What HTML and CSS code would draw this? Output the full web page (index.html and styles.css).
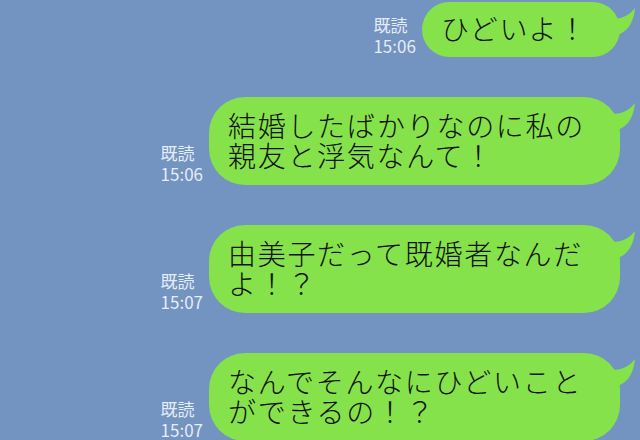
FILE: index.html
```html
<!DOCTYPE html>
<html lang="ja">
<head>
<meta charset="utf-8">
<link rel="stylesheet" href="styles.css">
</head>
<body>
<div class="chat">
  <div class="row">
    <div class="meta"><span>既読</span><span>15:06</span></div>
    <div class="bubble single">ひどいよ！<svg class="tail" width="26" height="34" viewBox="0 0 26 34"><path d="M0,13 Q15,14 24,2 Q22,22 9,28 L0,30 Z"/></svg></div>
  </div>
  <div class="row">
    <div class="meta"><span>既読</span><span>15:06</span></div>
    <div class="bubble wide">結婚したばかりなのに私の<br>親友と浮気なんて！<svg class="tail" width="26" height="34" viewBox="0 0 26 34"><path d="M0,13 Q15,14 24,2 Q22,22 9,28 L0,30 Z"/></svg></div>
  </div>
  <div class="row">
    <div class="meta"><span>既読</span><span>15:07</span></div>
    <div class="bubble wide">由美子だって既婚者なんだ<br>よ！？<svg class="tail" width="26" height="34" viewBox="0 0 26 34"><path d="M0,13 Q15,14 24,2 Q22,22 9,28 L0,30 Z"/></svg></div>
  </div>
  <div class="row">
    <div class="meta"><span>既読</span><span>15:07</span></div>
    <div class="bubble wide">なんでそんなにひどいこと<br>ができるの！？<svg class="tail" width="26" height="34" viewBox="0 0 26 34"><path d="M0,13 Q15,14 24,2 Q22,22 9,28 L0,30 Z"/></svg></div>
  </div>
</div>
</body>
</html>
```
FILE: styles.css
```css
html, body {
  margin: 0;
  padding: 0;
  background: #7393c1;
  width: 640px;
  height: 440px;
  overflow: hidden;
}
.chat {
  display: flex;
  flex-direction: column;
  gap: 40px;
  padding-top: 2px;
  padding-right: 20px;
  font-family: "Noto Sans CJK JP", "Noto Sans", sans-serif;
}
.row {
  display: flex;
  justify-content: flex-end;
  align-items: flex-end;
  gap: 6px;
}
.meta {
  display: flex;
  flex-direction: column;
  font-size: 17px;
  line-height: 21px;
  color: #e6ecf5;
  margin-bottom: 1px;
}
.bubble {
  position: relative;
  background: #85e24a;
  color: #111;
  font-size: 28px;
  font-weight: 300;
  line-height: 30px;
  letter-spacing: 1.7px;
  border-radius: 36px;
  padding: 13px 30px 15px 19px;
}
.single {
  padding: 11px 32px 14px 19px;
  border-radius: 28px;
}
.wide {
  width: 411px;
  box-sizing: border-box;
}
.tail {
  position: absolute;
  right: -17px;
  top: 4px;
  fill: #85e24a;
}
```
